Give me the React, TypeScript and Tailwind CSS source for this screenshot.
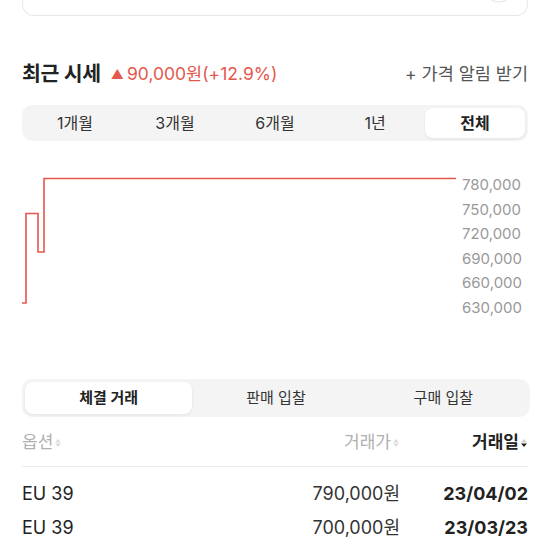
import React from 'react';

const periods = ['1개월', '3개월', '6개월', '1년', '전체'];
const tradeTabs = ['체결 거래', '판매 입찰', '구매 입찰'];
const yLabels = ['780,000', '750,000', '720,000', '690,000', '660,000', '630,000'];
const trades = [
    { option: 'EU 39', price: '790,000원', date: '23/04/02' },
    { option: 'EU 39', price: '700,000원', date: '23/03/23' },
];

function SortIcon({ active }: { active?: boolean }) {
    return (
        <svg width="8" height="12" viewBox="0 0 8 12" className="ml-[1px]">
            <path d="M4 2 L7 5.5 H1 Z" fill={active ? '#cfcfcf' : '#dcdcdc'} />
            <path d="M4 10 L7 6.5 H1 Z" fill={active ? '#222' : '#dcdcdc'} />
        </svg>
    );
}

export default function App() {
    return (
        <div className="w-[552px] h-[552px] bg-white overflow-hidden text-[#222]" style={{ fontFamily: 'Inter, "Noto Sans CJK KR", sans-serif' }}>
            {/* top card, cut off */}
            <div className="mx-[22px] mr-[24px] h-[16px] border-x border-b border-[#e8e8e8] rounded-b-[12px] flex justify-end pr-[12px] overflow-hidden">
                <svg width="32" height="16" viewBox="0 0 32 16" className="-mt-[2px]">
                    <circle cx="16" cy="-10" r="14" fill="none" stroke="#e6e6e6" strokeWidth="1.2" />
                </svg>
            </div>

            {/* heading */}
            <div className="flex items-center justify-between pl-[22px] pr-[24px] mt-[44px] h-[28px]">
                <div className="flex items-center">
                    <span className="text-[20.5px] font-bold tracking-[-0.3px]">최근 시세</span>
                    <span className="ml-[10px] text-[#e5574d] text-[13px] leading-none">▲</span>
                    <span className="ml-[3px] text-[#e5574d] text-[17.5px]">90,000원(+12.9%)</span>
                </div>
                <span className="text-[17.5px] text-[#555]">+ 가격 알림 받기</span>
            </div>

            {/* period tabs */}
            <div className="ml-[22px] mr-[24px] mt-[17px] h-[36px] bg-[#f4f4f4] rounded-[10px] p-[3px] grid grid-cols-5">
                {periods.map(p => (
                    <div
                        key={p}
                        className={
                            p === '전체'
                                ? 'flex items-center justify-center bg-white rounded-[8px] shadow-[0_1px_3px_rgba(0,0,0,0.08)] text-[16px] font-bold text-[#222]'
                                : 'flex items-center justify-center text-[16px] text-[#333]'
                        }
                    >
                        {p}
                    </div>
                ))}
            </div>

            {/* chart */}
            <div className="flex pl-[22px] mt-[20px] h-[200px]">
                <svg width="434" height="180" viewBox="0 0 434 180">
                    <polyline
                        points="0,142 4,142 4,52.5 16,52.5 16,91 22,91 22,17.5 434,17.5"
                        fill="none"
                        stroke="#e5574d"
                        strokeWidth="1.6"
                    />
                </svg>
                <div className="ml-[6px] mt-[12px] flex flex-col">
                    {yLabels.map(l => (
                        <span key={l} className="text-[15px] leading-[24.6px] text-[#999]">{l}</span>
                    ))}
                </div>
            </div>

            {/* trade tabs */}
            <div className="ml-[22px] mr-[22px] mt-[18px] h-[38px] bg-[#f4f4f4] rounded-[10px] p-[3px] grid grid-cols-3">
                {tradeTabs.map((t, i) => (
                    <div
                        key={t}
                        className={
                            i === 0
                                ? 'flex items-center justify-center bg-white rounded-[8px] shadow-[0_1px_3px_rgba(0,0,0,0.08)] text-[15px] font-bold'
                                : 'flex items-center justify-center text-[15px] text-[#333]'
                        }
                    >
                        {t}
                    </div>
                ))}
            </div>

            {/* table header */}
            <div className="ml-[22px] mr-[24px] mt-[12px] pb-[9px] border-b border-[#ebebeb]">
                <div className="h-[28px] flex items-center">
                    <div className="flex-1 flex items-center text-[17px] text-[#b0b0b0]">
                        옵션<SortIcon />
                    </div>
                    <div className="w-[120px] flex items-center justify-end text-[17px] text-[#b0b0b0]">
                        거래가<SortIcon />
                    </div>
                    <div className="w-[128px] flex items-center justify-end text-[17px] font-bold text-[#222]">
                        거래일<SortIcon active />
                    </div>
                </div>
            </div>

            {/* rows */}
            <div className="ml-[22px] mr-[24px] mt-[9px] flex flex-col">
                {trades.map(t => (
                    <div key={t.date} className="h-[34px] flex items-center text-[18px]">
                        <div className="flex-1">{t.option}</div>
                        <div className="w-[120px] text-right text-[#333]">{t.price}</div>
                        <div className="w-[128px] text-right font-bold">{t.date}</div>
                    </div>
                ))}
            </div>
        </div>
    );
}
